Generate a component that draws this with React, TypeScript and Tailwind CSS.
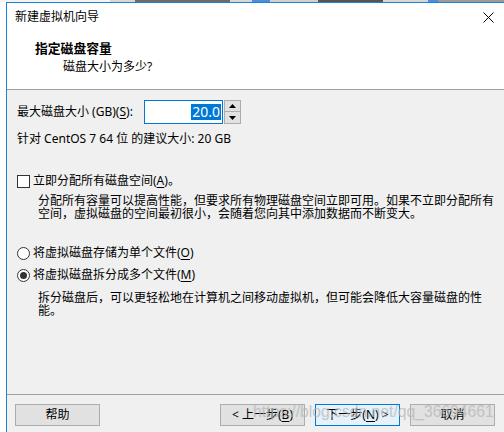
import React from "react";

function U({ children }: { children: React.ReactNode }) {
  return <span className="underline underline-offset-[2px]">{children}</span>;
}

function Btn({
  children,
  primary,
}: {
  children: React.ReactNode;
  primary?: boolean;
}) {
  return (
    <div
      className={
        "w-[85px] h-[22px] flex items-center justify-center border text-[12px] leading-[14px] " +
        (primary
          ? "border-[#0078d7] bg-[#e5f1fb]"
          : "border-[#adadad] bg-[#e1e1e1]")
      }
    >
      {children}
    </div>
  );
}

export default function App() {
  return (
    <div className="w-[504px] h-[432px] bg-white flex flex-col overflow-hidden relative text-black font-['Noto_Sans','Noto_Sans_CJK_SC',sans-serif]">
      {/* background window strip */}
      <div className="h-[2px] shrink-0 flex">
        <div className="w-[110px] bg-[#f4f4f4]" />
        <div className="w-[25px] bg-[#d8d8d8]" />
        <div className="w-[95px] bg-[#6b6b6b]" />
        <div className="w-[22px] bg-[#d8d8d8]" />
        <div className="w-[18px] bg-[#4a90d9]" />
        <div className="w-[48px] bg-[#d0d0d0]" />
        <div className="w-[65px] bg-[#555]" />
        <div className="w-[45px] bg-[#d8d8d8]" />
        <div className="w-[10px] bg-[#4a90d9]" />
        <div className="flex-1 bg-[#9a9a9a]" />
      </div>
      <div className="flex flex-1 min-h-0">
        <div className="w-[6px] bg-white shrink-0" />
        <div className="flex-1 flex flex-col border-l border-t border-[#1883d7] min-w-0">
          {/* header area */}
          <div className="h-[87px] shrink-0 bg-white border-b border-[#a0a0a0] flex flex-col">
            <div className="h-[28px] flex items-center justify-between pl-[8px] pr-[10px]">
              <span className="text-[12px] leading-[16px]">新建虚拟机向导</span>
              <svg width="11" height="11" viewBox="0 0 11 11">
                <path d="M0.5 0.5 L10.5 10.5 M10.5 0.5 L0.5 10.5" stroke="#000" strokeWidth="1" />
              </svg>
            </div>
            <div className="mt-[9px] pl-[28px] text-[12.8px] leading-[16px] font-bold">
              指定磁盘容量
            </div>
            <div className="mt-[3px] pl-[56px] text-[12px] leading-[16px]">
              磁盘大小为多少?
            </div>
          </div>
          {/* body */}
          <div className="flex-1 bg-[#f0f0f0] flex flex-col min-h-0">
            <div className="flex-1 flex flex-col pl-[10px] pt-[10px] text-[12px]">
              <div className="h-[24px] flex items-center">
                <span className="w-[127px] leading-[16px] whitespace-nowrap">
                  最大磁盘大小 (GB)(<U>S</U>):
                </span>
                <div className="w-[79px] h-[24px] bg-white border border-[#0078d7] flex items-center justify-end pr-[1px]">
                  <span className="bg-[#0078d7] text-white text-[14px] leading-[16px] px-[1px]">
                    20.0
                  </span>
                </div>
                <div className="w-[17px] h-[24px] ml-[1px] flex flex-col">
                  <div className="h-[12px] bg-[#e1e1e1] border border-[#adadad] flex items-center justify-center">
                    <svg width="7" height="4" viewBox="0 0 7 4">
                      <path d="M0 4 L3.5 0 L7 4 Z" fill="#000" />
                    </svg>
                  </div>
                  <div className="h-[12px] bg-[#e1e1e1] border border-t-0 border-[#adadad] flex items-center justify-center">
                    <svg width="7" height="4" viewBox="0 0 7 4">
                      <path d="M0 0 L7 0 L3.5 4 Z" fill="#000" />
                    </svg>
                  </div>
                </div>
              </div>
              <div className="mt-[7px] leading-[16px] whitespace-nowrap">
                针对 CentOS 7 64 位 的建议大小: 20 GB
              </div>
              <div className="mt-[26px] h-[16px] flex items-center">
                <div className="w-[13px] h-[13px] bg-white border border-[#333]" />
                <span className="ml-[3px] leading-[16px] whitespace-nowrap">
                  立即分配所有磁盘空间(<U>A</U>)。
                </span>
              </div>
              <div className="mt-[5px] ml-[21px] leading-[13px] whitespace-nowrap">
                分配所有容量可以提高性能，但要求所有物理磁盘空间立即可用。如果不立即分配所有
                <br />
                空间，虚拟磁盘的空间最初很小，会随着您向其中添加数据而不断变大。
              </div>
              <div className="mt-[25px] h-[16px] flex items-center">
                <div className="w-[13px] h-[13px] rounded-full bg-white border border-[#333]" />
                <span className="ml-[3px] leading-[16px] whitespace-nowrap">
                  将虚拟磁盘存储为单个文件(<U>O</U>)
                </span>
              </div>
              <div className="mt-[6px] h-[16px] flex items-center">
                <div className="w-[13px] h-[13px] rounded-full bg-white border border-[#333] flex items-center justify-center">
                  <div className="w-[7px] h-[7px] rounded-full bg-[#333]" />
                </div>
                <span className="ml-[3px] leading-[16px] whitespace-nowrap">
                  将虚拟磁盘拆分成多个文件(<U>M</U>)
                </span>
              </div>
              <div className="mt-[8px] ml-[21px] leading-[13px] whitespace-nowrap">
                拆分磁盘后，可以更轻松地在计算机之间移动虚拟机，但可能会降低大容量磁盘的性
                <br />
                能。
              </div>
            </div>
            {/* footer */}
            <div className="h-[38px] shrink-0 border-t border-[#a0a0a0] flex items-start pt-[9px] pl-[8px] pr-[9px]">
              <Btn>帮助</Btn>
              <div className="flex-1" />
              <div className="flex gap-[10px]">
                <Btn>
                  &lt; 上一步(<U>B</U>)
                </Btn>
                <Btn primary>
                  下一步(<U>N</U>) &gt;
                </Btn>
                <Btn>取消</Btn>
              </div>
            </div>
          </div>
        </div>
      </div>
      {/* watermark overlay */}
      <div className="absolute left-[253px] top-[403px] text-[15.7px] leading-[18px] text-[#b4b4b4] opacity-70 whitespace-nowrap font-['Liberation_Sans',sans-serif] pointer-events-none">
        https://blog.csdn.net/qq_36694661
      </div>
    </div>
  );
}
